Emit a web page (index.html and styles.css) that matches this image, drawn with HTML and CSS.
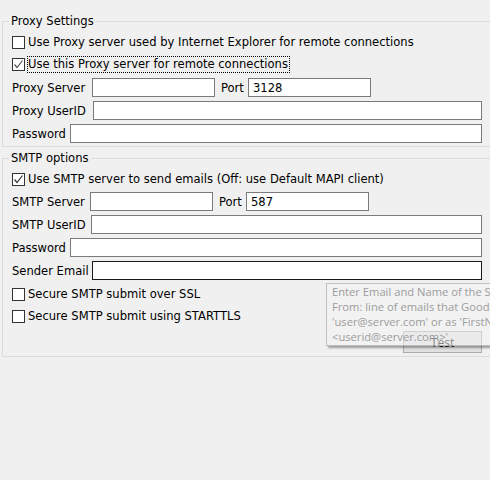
FILE: index.html
```html
<!DOCTYPE html>
<html>
<head>
<meta charset="utf-8">
<link rel="stylesheet" href="styles.css">
</head>
<body>
<div class="page">
  <fieldset class="group g1">
    <legend>Proxy Settings</legend>
    <div class="cbrow"><span class="cb"></span><span class="cbtext">Use Proxy server used by Internet Explorer for remote connections</span></div>
    <div class="cbrow"><span class="cb checked"><svg width="11" height="11" viewBox="0 0 11 11"><path d="M1.5 5.5 L4 8.5 L9.5 1.5" fill="none" stroke="#555" stroke-width="1.2"/></svg></span><span class="cbtext focus">Use this Proxy server for remote connections</span></div>
    <div class="row"><label class="lbl w80">Proxy Server</label><input class="inp short" type="text" value=""><label class="lbl port">Port</label><input class="inp short" type="text" value="3128"></div>
    <div class="row"><label class="lbl w81">Proxy UserID</label><input class="inp" type="text" value=""></div>
    <div class="row"><label class="lbl w58">Password</label><input class="inp" type="text" value=""></div>
  </fieldset>
  <fieldset class="group g2">
    <legend>SMTP options</legend>
    <div class="cbrow"><span class="cb checked"><svg width="11" height="11" viewBox="0 0 11 11"><path d="M1.5 5.5 L4 8.5 L9.5 1.5" fill="none" stroke="#333" stroke-width="1.2"/></svg></span><span class="cbtext">Use SMTP server to send emails (Off: use Default MAPI client)</span></div>
    <div class="row first"><label class="lbl w78">SMTP Server</label><input class="inp short" type="text" value=""><label class="lbl port">Port</label><input class="inp short" type="text" value="587"></div>
    <div class="row"><label class="lbl w79">SMTP UserID</label><input class="inp" type="text" value=""></div>
    <div class="row"><label class="lbl w58">Password</label><input class="inp" type="text" value=""></div>
    <div class="row"><label class="lbl w80">Sender Email</label><input class="inp active" type="text" value=""></div>
    <div class="cbrow gapped"><span class="cb"></span><span class="cbtext">Secure SMTP submit over SSL</span></div>
    <div class="cbrow"><span class="cb"></span><span class="cbtext">Secure SMTP submit using STARTTLS</span></div>
    <div class="btnrow"><button class="btn" type="button">Test</button></div>
    <div class="tooltip">Enter Email and Name of the Sender used in the<br>From: line of emails that GoodSync sends, like<br>'user@server.com' or as 'FirstName LastName<br>&lt;userid@server.com&gt;'</div>
  </fieldset>
</div>
</body>
</html>
```

FILE: styles.css
```css
html, body {
  margin: 0;
  padding: 0;
  background: #f0f0f0;
}
.page {
  position: relative;
  width: 490px;
  height: 480px;
  overflow: hidden;
  padding-top: 14px;
  box-sizing: border-box;
  font-family: "DejaVu Sans", sans-serif;
  font-size: 11.55px;
  color: #000;
}
.group {
  margin: 0 0 0 2px;
  width: 470px;
  padding: 3px 20px 3px 9px;
  border: 1px solid #dcdcdc;
  min-width: 0;
}
.g2 {
  margin-top: 4px;
  position: relative;
}
legend {
  padding: 0 2px;
  margin-left: -3px;
  line-height: 14px;
}
.cbrow {
  display: flex;
  align-items: center;
  height: 22px;
}
.cbrow.gapped {
  margin-top: 3px;
}
.cb {
  width: 13px;
  height: 13px;
  box-sizing: border-box;
  border: 1px solid #333;
  background: #fff;
  display: flex;
  align-items: center;
  justify-content: center;
  flex: none;
}
.cbtext {
  margin-left: 3px;
  white-space: nowrap;
  line-height: 15px;
}
.cbtext.focus {
  margin-left: 2px;
  border: 1px dotted #000;
  padding-right: 1px;
}
.row {
  display: flex;
  align-items: center;
  height: 19px;
  margin-top: 4px;
}
.cbrow + .row {
  margin-top: 3px;
}
.row.first {
  margin-top: 2px;
}
.lbl {
  flex: none;
  white-space: nowrap;
}
.w58 { width: 58px; }
.w78 { width: 78px; }
.w79 { width: 79px; }
.w80 { width: 80px; }
.w81 { width: 81px; }
.lbl.port {
  margin-left: 6px;
  width: 27px;
}
.inp {
  flex: 1;
  min-width: 0;
  height: 19px;
  box-sizing: border-box;
  border: 1px solid #7a7a7a;
  background: #fff;
  padding: 0 4px;
  margin: 0;
  font-family: "DejaVu Sans", sans-serif;
  font-size: 11.55px;
  color: #000;
  outline: none;
}
.inp.short {
  flex: none;
  width: 123px;
}
.inp.active {
  border-color: #1a1a1a;
}
.btnrow {
  display: flex;
  justify-content: flex-end;
  margin-top: 4px;
}
.btn {
  width: 79px;
  height: 22px;
  box-sizing: border-box;
  border: 1px solid #adadad;
  background: #e1e1e1;
  font-family: "Open Sans", sans-serif;
  font-size: 12px;
  color: #111;
  padding: 0;
}
.tooltip {
  position: absolute;
  left: 323px;
  top: 118px;
  width: 260px;
  height: 63px;
  box-sizing: border-box;
  padding: 0 5px;
  background: rgba(243, 243, 243, 0.5);
  border: 1px solid rgba(150, 150, 150, 0.55);
  box-shadow: 2px 2px 2px rgba(0, 0, 0, 0.35);
  color: #9c9c9c;
  font-family: "Open Sans", sans-serif;
  font-size: 11.2px;
  line-height: 15px;
  white-space: nowrap;
}
```
